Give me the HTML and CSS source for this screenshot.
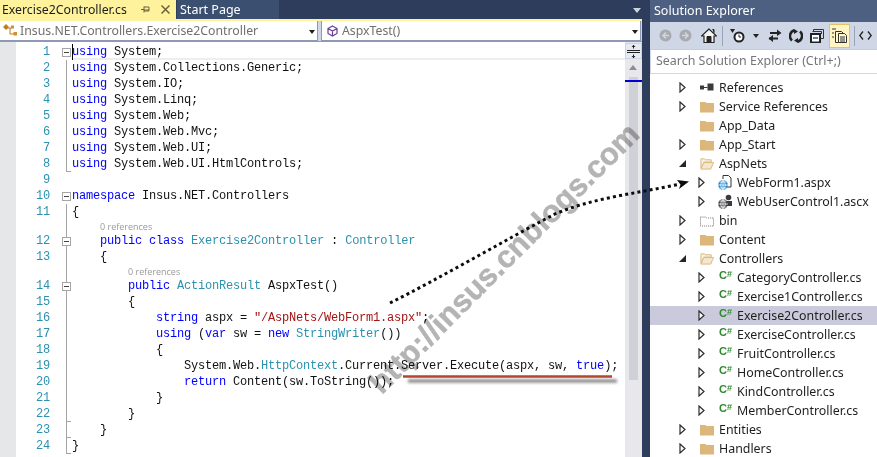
FILE: index.html
```html
<!DOCTYPE html>
<html lang="en">
<head>
<meta charset="utf-8">
<title>Exercise2Controller.cs</title>
<link rel="stylesheet" href="styles.css">
</head>
<body>
<svg class="defs" width="0" height="0" aria-hidden="true">
  <symbol id="folder" viewBox="0 0 14 12"><path d="M0 1.500h5.500l1 1H14V12H0z" fill="#dcb67a"/></symbol>
  <symbol id="open" viewBox="0 0 15 13"><path d="M1 3V1.500h4l1 1h6V5H4.500L1 11.500z" fill="#f6efe2" stroke="#dcb67a"/><path d="M1 12.500 4 5.500h10.500l-3 7z" fill="#f3e7cf" stroke="#dcb67a"/></symbol>
  <symbol id="closed" viewBox="0 0 7 11"><path d="M1 1 6 5.500 1 10z" fill="#fff" stroke="#2c2c2c" stroke-width="1.200"/></symbol>
  <symbol id="expanded" viewBox="0 0 7 7"><path d="M7 0V7H0z" fill="#262626"/></symbol>
</svg>
<div class="app">
  <main class="doc">
    <div class="tabs">
      <div class="tab active"><span>Exercise2Controller.cs</span>
        <svg class="pin" width="9" height="9" viewBox="0 0 9 9"><path d="M0 4.500h3M3 1.500v6M3 2h5v4H3M3 5h5" fill="none" stroke="#6b6338"/></svg>
        <svg class="x" width="9" height="9" viewBox="0 0 9 9"><path d="M.5.5l8 8M8.500.5l-8 8" stroke="#6b6338" stroke-width="1.500"/></svg>
      </div>
      <div class="tab other">Start Page</div>
      <div class="tabfill"><i class="tabdrop"></i></div>
    </div>
    <div class="nav">
      <div class="combo left">
        <svg class="ico" width="16" height="13" viewBox="0 0 16 13"><path d="M3 4h6M7 4v6h4" fill="none" stroke="#c27d1a"/><path d="M3 0 6 3 3 6 0 3z" fill="#c27d1a"/><path d="M8 1.500h3v3H8zM10.500 8h3.500v3.500h-3.500z" fill="#d18d32"/></svg>
        <span class="combotext">Insus.NET.Controllers.Exercise2Controller</span><i class="drop"></i>
      </div>
      <div class="combo right">
        <svg class="ico" width="11" height="12" viewBox="0 0 11 12"><path d="M5.500 1 10 3.500v5L5.500 11 1 8.500v-5zM1 3.500 5.500 6 10 3.500M5.500 6v5" fill="#fff" stroke="#6a3d9a" stroke-width="1.200"/></svg>
        <span class="combotext">AspxTest()</span><i class="drop"></i>
      </div>
    </div>
    <div class="editor">
      <div class="lines">
        <div class="row current"><span class="num">1</span><span class="fold"><b class="box"></b></span><code><i class="caret"></i><em>using</em> System;</code></div>
        <div class="row"><span class="num">2</span><span class="fold bar"></span><code><em>using</em> System.Collections.Generic;</code></div>
        <div class="row"><span class="num">3</span><span class="fold bar"></span><code><em>using</em> System.IO;</code></div>
        <div class="row"><span class="num">4</span><span class="fold bar"></span><code><em>using</em> System.Linq;</code></div>
        <div class="row"><span class="num">5</span><span class="fold bar"></span><code><em>using</em> System.Web;</code></div>
        <div class="row"><span class="num">6</span><span class="fold bar"></span><code><em>using</em> System.Web.Mvc;</code></div>
        <div class="row"><span class="num">7</span><span class="fold bar"></span><code><em>using</em> System.Web.UI;</code></div>
        <div class="row"><span class="num">8</span><span class="fold bar tick"></span><code><em>using</em> System.Web.UI.HtmlControls;</code></div>
        <div class="row"><span class="num">9</span><span class="fold"></span><code></code></div>
        <div class="row"><span class="num">10</span><span class="fold"><b class="box"></b></span><code><em>namespace</em> Insus.NET.Controllers</code></div>
        <div class="row"><span class="num">11</span><span class="fold bar"></span><code>{</code></div>
        <div class="row lens"><span class="num"></span><span class="fold bar"></span><span class="refs indent1">0 references</span></div>
        <div class="row"><span class="num">12</span><span class="fold bar"><b class="box"></b></span><code>    <em>public</em> <em>class</em> <u>Exercise2Controller</u> : <u>Controller</u></code></div>
        <div class="row"><span class="num">13</span><span class="fold bar"></span><code>    {</code></div>
        <div class="row lens"><span class="num"></span><span class="fold bar"></span><span class="refs indent2">0 references</span></div>
        <div class="row"><span class="num">14</span><span class="fold bar"><b class="box"></b></span><code>        <em>public</em> <u>ActionResult</u> AspxTest()</code></div>
        <div class="row"><span class="num">15</span><span class="fold bar"></span><code>        {</code></div>
        <div class="row"><span class="num">16</span><span class="fold bar"></span><code>            <em>string</em> aspx = <s>"/AspNets/WebForm1.aspx"</s>;</code></div>
        <div class="row"><span class="num">17</span><span class="fold bar"></span><code>            <em>using</em> (<em>var</em> sw = <em>new</em> <u>StringWriter</u>())</code></div>
        <div class="row"><span class="num">18</span><span class="fold bar"></span><code>            {</code></div>
        <div class="row"><span class="num">19</span><span class="fold bar"></span><code>                System.Web.<u>HttpContext</u>.Current.Server.Execute(aspx, sw, <em>true</em>);</code></div>
        <div class="row"><span class="num">20</span><span class="fold bar"></span><code>                <em>return</em> Content(sw.ToString());</code></div>
        <div class="row"><span class="num">21</span><span class="fold bar"></span><code>            }</code></div>
        <div class="row"><span class="num">22</span><span class="fold bar tick"></span><code>        }</code></div>
        <div class="row"><span class="num">23</span><span class="fold bar tick"></span><code>    }</code></div>
        <div class="row"><span class="num">24</span><span class="fold bar tick"></span><code>}</code></div>
      </div>
      <div class="vscroll">
        <div class="split"><svg width="15" height="15" viewBox="0 0 15 15"><path d="M1 6.500h13M1 8.500h13" stroke="#222"/><path d="M7.500 1v3.500M7.500 10.500V14" stroke="#222"/><path d="M5.500 3 7.500 1l2 2zM5.500 12l2 2 2-2z" fill="#222"/></svg></div>
        <div class="up"></div>
        <div class="thumb"></div>
        <i class="mark"></i>
      </div>
    </div>
  </main>
  <aside class="explorer">
    <div class="title">Solution Explorer</div>
    <div class="toolbar">
      <span class="btn w20"><svg width="13" height="13" viewBox="0 0 13 13"><circle cx="6.500" cy="6.500" r="6" fill="#a9aab0"/><path d="M7 3.500 4 6.500l3 3M4.500 6.500H10" fill="none" stroke="#cfd6e5" stroke-width="1.500"/></svg></span>
      <span class="btn w21"><svg width="13" height="13" viewBox="0 0 13 13"><circle cx="6.500" cy="6.500" r="6" fill="#a9aab0"/><path d="M6 3.500l3 3-3 3M8.500 6.500H3" fill="none" stroke="#cfd6e5" stroke-width="1.500"/></svg></span>
      <span class="btn w26"><svg width="16" height="15" viewBox="0 0 16 15"><path d="M8 1 .5 8h2.500v6.500h10V8h2.500z" fill="#f5f5f0" stroke="#222" stroke-width="1.200"/><path d="M6 8.500h4v6H6zM11.500 1.500h1.500V5" fill="#222" stroke="#222"/></svg></span>
      <i class="sep"></i>
      <span class="btn w30"><svg width="16" height="15" viewBox="0 0 16 15"><circle cx="9" cy="9" r="4.500" fill="#fff" stroke="#222" stroke-width="2"/><path d="M9 6.500V9h2" fill="none" stroke="#222"/><path d="M0 1h5L2.500 5z" fill="#222"/></svg></span>
      <i class="tooldrop"></i>
      <span class="btn w21 push"><svg width="14" height="13" viewBox="0 0 14 13"><path d="M2 4h8M1 9.500h9" fill="none" stroke="#222" stroke-width="2"/><path d="M9 .5 13.500 4 9 7zM5 6 .5 9.500 5 13z" fill="#222"/></svg></span>
      <span class="btn w21"><svg width="14" height="14" viewBox="0 0 14 14"><path d="M3 11.500A6 6 0 0 1 5.500 1.200M11 2.500A6 6 0 0 1 8.500 12.800" fill="none" stroke="#222" stroke-width="2.500"/><path d="M5 0l4 2.500-4 2.500zM9 14l-4-2.500L9 9z" fill="#222"/></svg></span>
      <span class="btn w21"><svg width="14" height="14" viewBox="0 0 14 14"><path d="M3.500 3V.5h10v9H11" fill="none" stroke="#333"/><path d="M2.500 2.500H11.500V5" fill="none" stroke="#333" stroke-width="1"/><rect x="1" y="5" width="9" height="8.500" fill="#fff" stroke="#222" stroke-width="2"/><path d="M3 9h5" stroke="#1b5a9a" stroke-width="1.500"/></svg></span>
      <span class="btn active-btn"><svg width="15" height="15" viewBox="0 0 15 15"><path d="M1 0v2M3 0v2M1 4v2M1 8v2" stroke="#333"/><path d="M3.500 3.500h6l2 2v9h-8z" fill="#fff9cf" stroke="#333"/><path d="M6.500 5.500h6l2 2v7h-8z" fill="#fff9cf" stroke="#333"/><path d="M8 9h5M8 11h5M8 13h5" stroke="#333"/></svg></span>
      <i class="sep tight"></i>
      <span class="btn w21"><svg width="13" height="9" viewBox="0 0 13 9"><path d="M4 .5 .8 4.500 4 8.500M9 .5l3.200 4L9 8.500" fill="none" stroke="#222" stroke-width="1.300"/></svg></span>
    </div>
    <div class="search">Search Solution Explorer (Ctrl+;)</div>
    <div class="tree">
      <div class="item"><svg class="exp"><use href="#closed"/></svg><svg class="ic" viewBox="0 0 14 12"><path d="M0 4h4v4H0zM7.500 2h6v7h-6z" fill="#3b3b3f"/><path d="M4 6h3.500" stroke="#3b3b3f"/></svg><span>References</span></div>
      <div class="item"><svg class="exp"><use href="#closed"/></svg><svg class="ic"><use href="#folder"/></svg><span>Service References</span></div>
      <div class="item"><span class="exp"></span><svg class="ic"><use href="#folder"/></svg><span>App_Data</span></div>
      <div class="item"><svg class="exp"><use href="#closed"/></svg><svg class="ic"><use href="#folder"/></svg><span>App_Start</span></div>
      <div class="item"><svg class="exp down"><use href="#expanded"/></svg><svg class="ic"><use href="#open"/></svg><span>AspNets</span></div>
      <div class="item sub"><svg class="exp"><use href="#closed"/></svg><svg class="ic tall" viewBox="0 0 14 15"><path d="M5 4V.5h5.500l2.500 2.500v9H9" fill="#fff" stroke="#333"/><circle cx="5" cy="10" r="4.800" fill="#1b87d2"/><path d="M0 10h10M5 5v10M1.500 7h7M1.500 13h7M5 5.500c-3 3-3 6 0 9M5 5.500c3 3 3 6 0 9" fill="none" stroke="#fff" stroke-width=".8"/></svg><span>WebForm1.aspx</span></div>
      <div class="item sub"><svg class="exp"><use href="#closed"/></svg><svg class="ic tall" viewBox="0 0 14 15"><circle cx="10.500" cy="3.500" r="2.800" fill="#3b3b3f"/><path d="M8 7h6v5H8z" fill="#3b3b3f"/><circle cx="5" cy="10" r="4.800" fill="#3b3b3f"/><path d="M0 10h10M5 5v10M1.500 7h7M1.500 13h7M5 5.500c-3 3-3 6 0 9M5 5.500c3 3 3 6 0 9" fill="none" stroke="#fff" stroke-width=".8"/></svg><span>WebUserControl1.ascx</span></div>
      <div class="item"><svg class="exp"><use href="#closed"/></svg><svg class="ic" viewBox="0 0 14 12"><path d="M.5 2.500h5l1 1h7v8H.5z" fill="#fff" stroke="#777" stroke-dasharray="1 1"/></svg><span>bin</span></div>
      <div class="item"><svg class="exp"><use href="#closed"/></svg><svg class="ic"><use href="#folder"/></svg><span>Content</span></div>
      <div class="item"><svg class="exp down"><use href="#expanded"/></svg><svg class="ic"><use href="#open"/></svg><span>Controllers</span></div>
      <div class="item sub"><svg class="exp"><use href="#closed"/></svg><span class="cs">C<sup>#</sup></span><span>CategoryController.cs</span></div>
      <div class="item sub"><svg class="exp"><use href="#closed"/></svg><span class="cs">C<sup>#</sup></span><span>Exercise1Controller.cs</span></div>
      <div class="item sub selected"><svg class="exp"><use href="#closed"/></svg><span class="cs">C<sup>#</sup></span><span>Exercise2Controller.cs</span></div>
      <div class="item sub"><svg class="exp"><use href="#closed"/></svg><span class="cs">C<sup>#</sup></span><span>ExerciseController.cs</span></div>
      <div class="item sub"><svg class="exp"><use href="#closed"/></svg><span class="cs">C<sup>#</sup></span><span>FruitController.cs</span></div>
      <div class="item sub"><svg class="exp"><use href="#closed"/></svg><span class="cs">C<sup>#</sup></span><span>HomeController.cs</span></div>
      <div class="item sub"><svg class="exp"><use href="#closed"/></svg><span class="cs">C<sup>#</sup></span><span>KindController.cs</span></div>
      <div class="item sub"><svg class="exp"><use href="#closed"/></svg><span class="cs">C<sup>#</sup></span><span>MemberController.cs</span></div>
      <div class="item"><svg class="exp"><use href="#closed"/></svg><svg class="ic"><use href="#folder"/></svg><span>Entities</span></div>
      <div class="item"><svg class="exp"><use href="#closed"/></svg><svg class="ic"><use href="#folder"/></svg><span>Handlers</span></div>
    </div>
  </aside>
  <div class="watermark">http://insus.cnblogs.com</div>
  <svg class="overlay" width="877" height="457" viewBox="0 0 877 457" aria-hidden="true">
    <defs><filter id="soft" filterUnits="userSpaceOnUse" x="395" y="368" width="235" height="26"><feGaussianBlur stdDeviation="1.500"/></filter></defs>
    <path d="M408 381H617" stroke="#777" stroke-width="3" filter="url(#soft)"/>
    <path d="M403 376.500H612" stroke="#b5452f" stroke-width="2.500"/>
    <path d="M390 303 C 440 278, 500 243, 553 215 C 590 198, 640 193, 680 184" fill="none" stroke="#0c0c0c" stroke-width="3" stroke-dasharray="3 3.200"/>
    <path d="M689 181.500 677 180 680.500 184.500 679 189z" fill="#0c0c0c"/>
  </svg>
</div>
</body>
</html>
```
FILE: styles.css
```css
* { box-sizing: border-box; }
html, body { margin: 0; padding: 0; }
body { width: 877px; height: 457px; overflow: hidden; background: #2d3d5b; }
.defs { position: absolute; }
.app { position: relative; display: flex; width: 877px; height: 457px; overflow: hidden; font-family: "Noto Sans", sans-serif; }

.doc { width: 642px; margin-right: 8px; display: flex; flex-direction: column; flex: none; }
.tabs { display: flex; height: 19px; flex: none; font-size: 12.3px; line-height: 19px; }
.tab { flex: none; white-space: nowrap; }
.tab.active { width: 176px; padding-left: 2px; background: #fff29d; color: #1c1c1c; display: flex; align-items: center; }
.pin { margin-left: 14px; }
.x { margin-left: 11px; }
.tab.other { width: 102px; margin-left: 1px; padding-left: 3px; background: #3b4f71; color: #fff; font-size: 12.5px; }
.tabfill { flex: 1; position: relative; }
.tabdrop { position: absolute; right: 1px; top: 8px; border: 4px solid transparent; border-top: 5px solid #ced4dd; }

.nav { display: flex; height: 23px; flex: none; gap: 3px; background: #cfd6e5; border-top: 2px solid #fff29d; border-bottom: 1px solid #8e99b5; padding-right: 1px; font-size: 12.3px; }
.combo { display: flex; align-items: center; height: 20px; background: #fff; color: #6f6f6f; border-bottom: 1px solid #8e99b5; position: relative; }
.combo.left { width: 318px; padding-left: 3px; border-right: 1px solid #8e99b5; }
.combo.right { flex: 1; padding-left: 5px; border-left: 1px solid #8e99b5; border-right: 1px solid #8e99b5; }
.combotext { margin-left: 1px; white-space: nowrap; }
.combo.right .combotext { margin-left: 4px; }
.drop { position: absolute; right: 2px; top: 9px; border: 3px solid transparent; border-top: 4px solid #1e1e1e; }

.editor { display: flex; flex: 1; min-height: 0; background: #fff; }
.lines { flex: 1; border-left: 16px solid #e6e7e8; min-width: 0; padding-top: 2px; }
.row { display: flex; height: 16px; line-height: 16px; }
.row.lens { height: 13px; line-height: 13px; }
.num { width: 34px; flex: none; text-align: right; font: 12px/16px "Liberation Mono", monospace; letter-spacing: -.2px; color: #2b91af; }
.fold { width: 22px; flex: none; display: flex; align-items: center; }
.fold.bar { background: linear-gradient(#a5a5a5, #a5a5a5) 16px 0 / 1px 100% no-repeat; }
.fold.tick { background: linear-gradient(#a5a5a5, #a5a5a5) 16px 0 / 1px 100% no-repeat, linear-gradient(#a5a5a5, #a5a5a5) 16px 100% / 5px 1px no-repeat; }
.box { width: 9px; height: 9px; margin-left: 12px; border: 1px solid #a5a5a5; background: linear-gradient(#444, #444) center / 5px 1px no-repeat #fff; }
code { font: 12px/16px "Liberation Mono", monospace; letter-spacing: -.2px; color: #111; white-space: pre; }
code em { font-style: normal; color: #0000ff; }
code u { text-decoration: none; color: #2b91af; }
code s { text-decoration: none; color: #a31515; }
.current code { flex: 1; position: relative; box-shadow: inset 0 -2px 0 #eeeef2; }
.caret { position: absolute; left: 0; top: 0; width: 1px; height: 16px; background: #000; }
.refs { font-family: "Open Sans", sans-serif; font-size: 9px; color: #9a9a9a; white-space: nowrap; }
.indent1 { padding-left: 28px; }
.indent2 { padding-left: 56px; }

.vscroll { position: relative; width: 17px; flex: none; background: #e8e8ec; padding-top: 1px; }
.split { height: 16px; background: #e6eaf3; border: 1px solid #cdd3e0; display: flex; align-items: center; justify-content: center; }
.up { height: 18px; position: relative; }
.up::before { content: ""; position: absolute; left: 4px; top: 6px; border: 4.5px solid transparent; border-top: 0; border-bottom: 5px solid #8b8e96; }
.thumb { height: 303px; margin: 0 4px; background: #d0d1d7; }
.mark { position: absolute; left: 0; right: 0; top: 38px; height: 2px; background: #0000d6; }

.explorer { flex: 1; display: flex; flex-direction: column; min-width: 0; background: #fff; }
.title { height: 22px; flex: none; background: #4d6082; color: #fff; font-size: 12.5px; line-height: 21px; padding-left: 4px; }
.toolbar { height: 28px; flex: none; display: flex; align-items: center; background: #cfd6e5; padding-left: 5px; border-bottom: 1px solid #c5cbdb; }
.btn { display: flex; align-items: center; justify-content: center; flex: none; height: 24px; }
.w20 { width: 20px; }
.w21 { width: 21px; }
.w26 { width: 26px; }
.w30 { width: 30px; }
.push { margin-left: 5px; }
.sep { width: 1px; height: 20px; background: #9aa4b8; flex: none; }
.sep.tight { margin-left: 4px; }
.tooldrop { border: 3px solid transparent; border-top: 4px solid #222; margin-top: 4px; flex: none; }
.active-btn { width: 21px; margin-left: 2px; background: #fff5c2; border: 1px solid #e5c365; }
.search { height: 24px; flex: none; background: #fff; color: #767676; font-size: 12.45px; line-height: 22px; padding-left: 5px; border-bottom: 1px solid #cfd6e5; border-left: 1px solid #cfd6e5; }
.tree { flex: 1; padding-top: 4px; color: #1e1e1e; font-size: 12.4px; background: #fff; overflow: hidden; }
.item { display: flex; align-items: center; height: 19px; padding-left: 29px; white-space: nowrap; }
.item.sub { padding-left: 48px; }
.item.selected { background: #c9cbdc; }
.exp { width: 7px; height: 11px; flex: none; margin-right: 14px; }
.exp.down { height: 7px; }
.ic { width: 14px; height: 13px; flex: none; margin-right: 5px; }
.ic.tall { height: 15px; margin-right: 5px; margin-left: -1px; }
.cs { width: 18px; flex: none; font: bold 11px/12px "Liberation Sans", sans-serif; color: #2f8a2f; margin-top: -5px; }
.cs sup { font-size: 9px; vertical-align: 2px; line-height: 0; }

.watermark { position: absolute; left: 325px; top: 251px; width: 340px; text-align: center; transform: rotate(-45deg); font: bold 31px/34px "Liberation Sans", sans-serif; color: #b4b4b4; -webkit-text-stroke: .5px #b4b4b4; mix-blend-mode: multiply; white-space: nowrap; }
.overlay { position: absolute; left: 0; top: 0; pointer-events: none; }
```
